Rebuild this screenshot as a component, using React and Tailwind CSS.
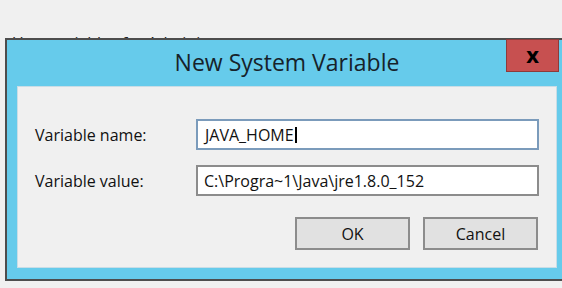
import React from "react";

export default function App() {
    return (
        <div className="w-[562px] h-[288px] overflow-hidden bg-[#f0f0f0] font-['Open_Sans',sans-serif] text-[#111]">
            {/* text of the window behind, mostly covered */}
            <div className="h-[38px] pt-[35px] pl-[12px]">
                <div className="h-[3px] overflow-hidden text-[16px] leading-none text-[#222]">User variables for Administrator</div>
            </div>

            <div className="relative ml-[5px] w-[564px] h-[243px] border-2 border-[#4d4d4d] bg-[#66cbeb]">
                <div className="h-[46px] flex items-center justify-center pb-[2px]">
                    <span className="text-[23px] text-[#16222a]">New System Variable</span>
                </div>

                <button className="absolute -top-[1px] right-[8px] w-[53px] h-[33px] bg-[#c75050] border border-[#8e3a3a] flex items-center justify-center pb-[4px]">
                    <span className="text-[22px] font-bold leading-none text-black">x</span>
                </button>

                <div className="mx-[10px] h-[182px] bg-[#f0f0f0] border border-[#c9dde6] pl-[17px] pr-[16px] pt-[32px]">
                    <div className="flex items-center h-[31px]">
                        <div className="w-[161px] text-[16px]">Variable name:</div>
                        <div className="w-[343px] h-[31px] bg-white border-2 border-[#7b9bbb] flex items-center pl-[7px] text-[16px]">
                            JAVA_HOME
                            <span className="inline-block w-[2px] h-[16px] bg-black ml-[1px]"></span>
                        </div>
                    </div>
                    <div className="flex items-center h-[31px] mt-[15px]">
                        <div className="w-[161px] text-[16px]">Variable value:</div>
                        <div className="w-[343px] h-[31px] bg-white border-2 border-[#8c8c8c] flex items-center pl-[6px] text-[16px]">
                            C:\Progra~1\Java\jre1.8.0_152
                        </div>
                    </div>
                    <div className="flex justify-end gap-[13px] mt-[21px] pr-[2px]">
                        <button className="w-[115px] h-[33px] bg-[#e1e1e1] border-2 border-[#8c8c8c] text-[16px]">OK</button>
                        <button className="w-[115px] h-[33px] bg-[#e1e1e1] border-2 border-[#8c8c8c] text-[16px]">Cancel</button>
                    </div>
                </div>
            </div>
        </div>
    );
}
